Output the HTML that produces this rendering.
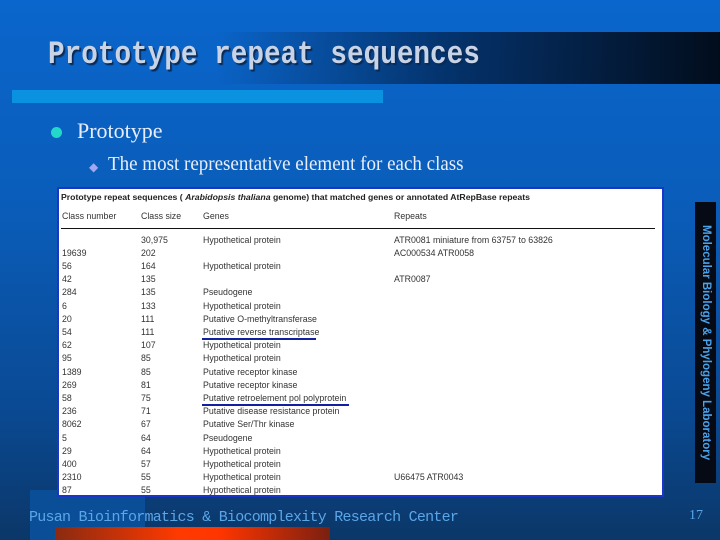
<!DOCTYPE html>
<html><head><style>
body{margin:0;width:720px;height:540px;overflow:hidden;position:relative;font-family:"Liberation Serif",serif;
background:linear-gradient(180deg,#0a66cc 0%,#0a5cb8 40%,#0a4a94 75%,#0b3768 100%);}
.a{position:absolute}
.r{position:absolute;left:62px;height:11px;font-family:"Liberation Sans",sans-serif;font-size:8.8px;line-height:11px;color:#333;white-space:nowrap}
.r span{position:absolute;top:0}
.c1{left:0}.c2{left:79px}.c3{left:141px}.c4{left:332px}
</style></head><body>
<div class="a" style="left:0;top:32px;width:720px;height:52px;background:linear-gradient(90deg,rgba(0,0,0,0) 0%,rgba(0,0,0,0) 30%,rgba(2,30,70,.7) 62%,#020d1c 100%)"></div>
<div class="a" style="left:48px;top:36px;font-size:32px;color:#c8d4e6;text-shadow:2px 2px 1px #0a2a55;font-family:'Liberation Mono',monospace;font-weight:bold;transform:scaleX(0.865);transform-origin:left">Prototype repeat sequences</div>
<div class="a" style="left:12px;top:90px;width:371px;height:13px;background:#0a92e0"></div>
<div class="a" style="left:51px;top:127px;width:11px;height:11px;border-radius:50%;background:#22d8c8"></div>
<div class="a" style="left:77px;top:118px;font-size:22px;color:#e8eef8">Prototype</div>
<div class="a" style="left:89px;top:160px;color:#9fa8f0;font-size:12px">◆</div>
<div class="a" style="left:108px;top:153px;font-size:20px;color:#e8eef8;transform:scaleX(0.95);transform-origin:left">The most representative element for each class</div>
<div class="a" style="left:30px;top:490px;width:115px;height:50px;background:#0a4e98"></div>
<div class="a" style="left:55px;top:527px;width:275px;height:13px;background:linear-gradient(90deg,#8a2a10,#ff3a00 45%,#ff3500 60%,#7a2010)"></div>
<div class="a" style="left:57px;top:187px;width:603px;height:306px;background:#fff;border:2px solid #1a35c8"></div>
<div class="a" style="left:61px;top:192px;font-family:'Liberation Sans',sans-serif;font-size:8.7px;font-weight:bold;color:#222">Prototype repeat sequences ( <i>Arabidopsis thaliana</i> genome) that matched genes or annotated AtRepBase repeats</div>
<div class="a" style="left:61px;top:228px;width:594px;height:1px;background:#111"></div>
<div class="r" style="top:211px"><span class="c1">Class number</span><span class="c2">Class size</span><span class="c3">Genes</span><span class="c4">Repeats</span></div>
<div class="r" style="top:234.5px"><span class="c2">30,975</span><span class="c3">Hypothetical protein</span><span class="c4">ATR0081 miniature from 63757 to 63826</span></div>
<div class="r" style="top:247.7px"><span class="c1">19639</span><span class="c2">202</span><span class="c4">AC000534 ATR0058</span></div>
<div class="r" style="top:260.9px"><span class="c1">56</span><span class="c2">164</span><span class="c3">Hypothetical protein</span></div>
<div class="r" style="top:274.1px"><span class="c1">42</span><span class="c2">135</span><span class="c4">ATR0087</span></div>
<div class="r" style="top:287.3px"><span class="c1">284</span><span class="c2">135</span><span class="c3">Pseudogene</span></div>
<div class="r" style="top:300.5px"><span class="c1">6</span><span class="c2">133</span><span class="c3">Hypothetical protein</span></div>
<div class="r" style="top:313.7px"><span class="c1">20</span><span class="c2">111</span><span class="c3">Putative O-methyltransferase</span></div>
<div class="r" style="top:326.9px"><span class="c1">54</span><span class="c2">111</span><span class="c3">Putative reverse transcriptase</span></div>
<div class="r" style="top:340.1px"><span class="c1">62</span><span class="c2">107</span><span class="c3">Hypothetical protein</span></div>
<div class="r" style="top:353.3px"><span class="c1">95</span><span class="c2">85</span><span class="c3">Hypothetical protein</span></div>
<div class="r" style="top:366.5px"><span class="c1">1389</span><span class="c2">85</span><span class="c3">Putative receptor kinase</span></div>
<div class="r" style="top:379.7px"><span class="c1">269</span><span class="c2">81</span><span class="c3">Putative receptor kinase</span></div>
<div class="r" style="top:392.9px"><span class="c1">58</span><span class="c2">75</span><span class="c3">Putative retroelement pol polyprotein</span></div>
<div class="r" style="top:406.1px"><span class="c1">236</span><span class="c2">71</span><span class="c3">Putative disease resistance protein</span></div>
<div class="r" style="top:419.3px"><span class="c1">8062</span><span class="c2">67</span><span class="c3">Putative Ser/Thr kinase</span></div>
<div class="r" style="top:432.5px"><span class="c1">5</span><span class="c2">64</span><span class="c3">Pseudogene</span></div>
<div class="r" style="top:445.7px"><span class="c1">29</span><span class="c2">64</span><span class="c3">Hypothetical protein</span></div>
<div class="r" style="top:458.9px"><span class="c1">400</span><span class="c2">57</span><span class="c3">Hypothetical protein</span></div>
<div class="r" style="top:472.1px"><span class="c1">2310</span><span class="c2">55</span><span class="c3">Hypothetical protein</span><span class="c4">U66475 ATR0043</span></div>
<div class="r" style="top:485.3px"><span class="c1">87</span><span class="c2">55</span><span class="c3">Hypothetical protein</span></div>
<div class="a" style="left:202px;top:338px;width:114px;height:2px;background:#1020a0"></div>
<div class="a" style="left:202px;top:404px;width:147px;height:2px;background:#1020a0"></div>
<div class="a" style="left:695px;top:202px;width:21px;height:281px;background:#050a14"></div>
<div class="a" style="left:695px;top:202px;width:21px;height:281px;writing-mode:vertical-rl;font-family:'Liberation Sans',sans-serif;font-weight:bold;font-size:11.5px;color:#4aa2ea;line-height:21px;text-align:center;white-space:nowrap">Molecular Biology &amp; Phylogeny Laboratory</div>
<div class="a" style="left:29px;top:509px;font-size:15px;color:#5aa6e8;font-family:'Liberation Mono',monospace;letter-spacing:-0.75px">Pusan Bioinformatics &amp; Biocomplexity Research Center</div>
<div class="a" style="left:689px;top:508px;font-size:14px;color:#5aa6e8">17</div>
</body></html>
